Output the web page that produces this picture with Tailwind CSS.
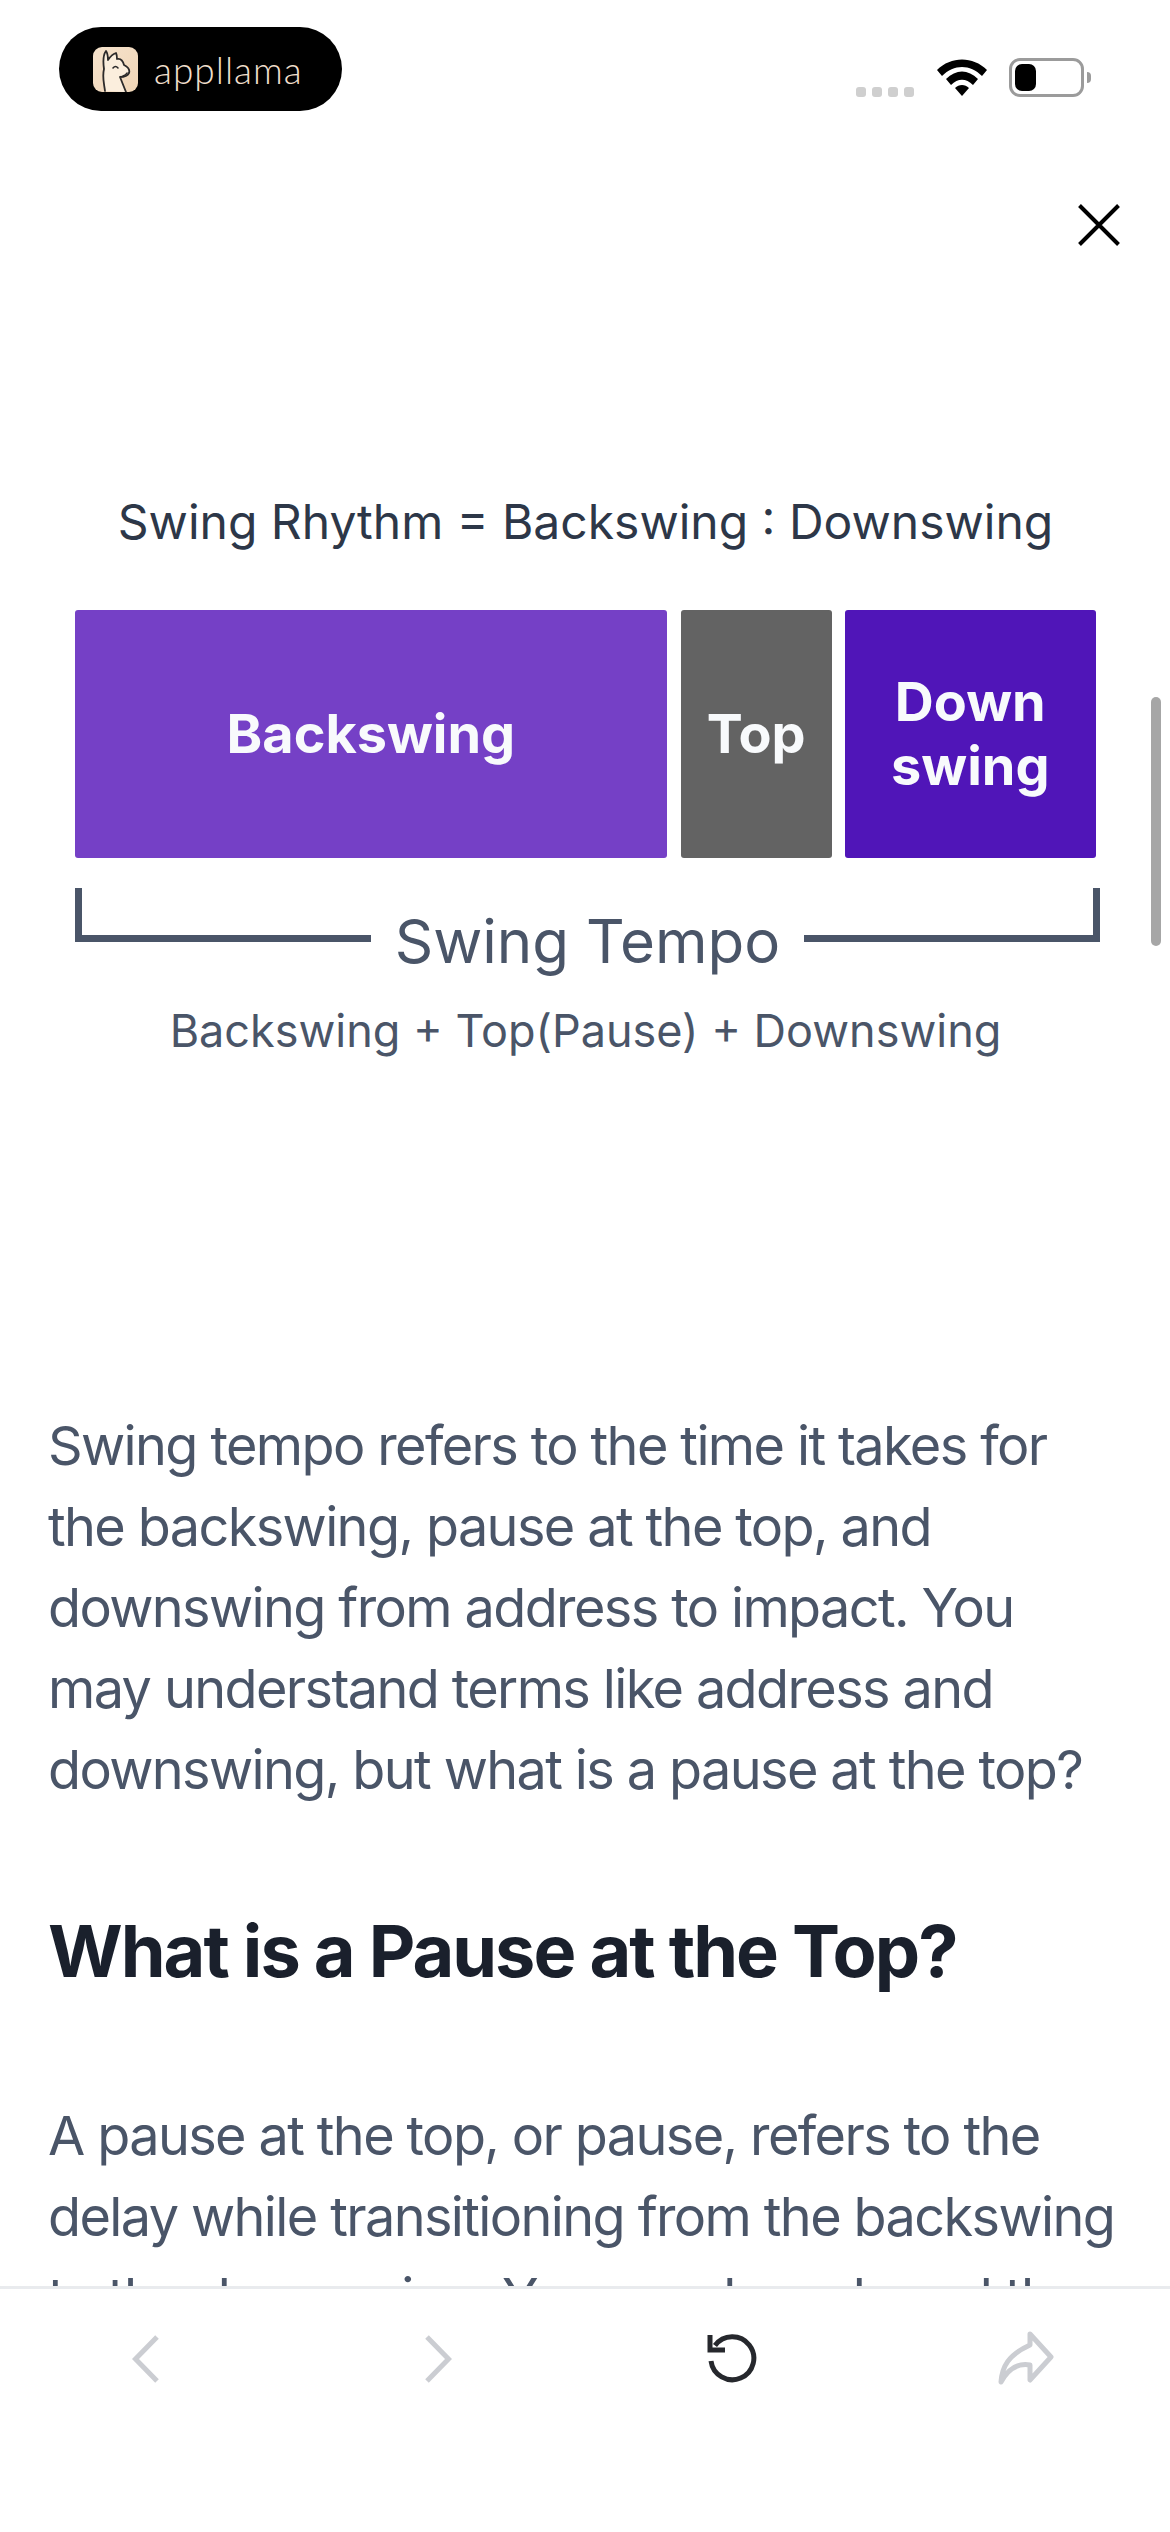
<!DOCTYPE html>
<html><head><meta charset="utf-8"><script src="https://cdn.jsdelivr.net/npm/@tailwindcss/browser@4"></script></head>
<body class="m-0 bg-white">
<div class="relative w-[1170px] h-[2532px] overflow-hidden bg-white font-['Inter',sans-serif]">
  <!-- status bar -->
  <div class="flex items-start justify-between pl-[59px] pr-[79px] pt-[27px] h-[204px]">
    <div class="flex items-center w-[283px] h-[84px] rounded-full bg-black pl-[34px] gap-[16px]">
      <svg class="w-[45px] h-[45px]" viewBox="0 0 45 45">
        <defs><linearGradient id="lg" x1="0" y1="0" x2="1" y2="1"><stop offset="0" stop-color="#f6e3cd"/><stop offset="1" stop-color="#f0d5b6"/></linearGradient></defs>
        <rect width="45" height="45" rx="9" fill="url(#lg)"/>
        <path d="M12 44 C11 36 9 30 11 22 C10 15 10 8 13 4 C15 7 15 10 15 13 C17 10 20 7 23 6 C24 8 24 10 24 12 C28 11 30 14 31 18 C35 20 37 23 36 26 C34 30 30 30 27 30 C29 35 31 40 33 45" fill="#fbeedd" stroke="#2c2a2a" stroke-width="1.8" stroke-linecap="round" stroke-linejoin="round"/>
        <path d="M20 21 Q22.500 18 25 21 M30 29 Q33 28 34 26" fill="none" stroke="#2c2a2a" stroke-width="1.600" stroke-linecap="round"/>
      </svg>
      <span class="font-['Lato',sans-serif] font-light text-[37px] leading-none text-[#f0dfcc] tracking-[1px] mt-[1px]">appllama</span>
    </div>
    <div class="flex items-center mt-[31px] h-[39px]">
      <div class="flex gap-[6px] self-end">
        <span class="w-[10px] h-[10px] rounded-[3px] bg-[#cfcfcf]"></span>
        <span class="w-[10px] h-[10px] rounded-[3px] bg-[#cfcfcf]"></span>
        <span class="w-[10px] h-[10px] rounded-[3px] bg-[#cfcfcf]"></span>
        <span class="w-[10px] h-[10px] rounded-[3px] bg-[#cfcfcf]"></span>
      </div>
      <svg class="ml-[23px] w-[50px] h-[37px]" viewBox="0 0 50 37">
        <path d="M0 11 C14 -3 36 -3 50 11 L45 17 C33 5 17 5 5 17 Z M9 20 C19 10 31 10 41 20 L36 26 C29 19 21 19 14 26 Z M18 29 C22 25 28 25 32 29 L25 37 Z" fill="#000"/>
      </svg>
      <div class="ml-[22px] flex items-center">
        <div class="w-[75px] h-[39px] rounded-[11px] border-[3px] border-[#9b9b9b] p-[3px]">
          <div class="w-[21px] h-full rounded-[7px] bg-black"></div>
        </div>
        <div class="ml-[3px] w-[4px] h-[11px] rounded-r-full bg-[#9b9b9b]"></div>
      </div>
    </div>
  </div>
  <!-- close -->
  <div class="flex justify-end pr-[50px] h-[42px]">
    <svg class="w-[42px] h-[42px]" viewBox="0 0 42 42"><path d="M1.500 1.500 L40.500 40.500 M40.500 1.500 L1.500 40.500" stroke="#000" stroke-width="4" fill="none"/></svg>
  </div>
  <!-- diagram -->
  <div class="pl-[75px] pr-[74px] pt-[240px]">
    <p class="text-center text-[48px] leading-[72px] text-[#2d3748]">Swing Rhythm = Backswing : Downswing</p>
    <div class="flex mt-[52px] h-[248px] gap-[13px] text-[54px] leading-[64px] font-bold text-[#f8fafc] text-center">
      <div class="w-[593px] flex items-center justify-center rounded-[3px] bg-[#7540c6]">Backswing</div>
      <div class="w-[151px] ml-[1px] flex items-center justify-center rounded-[3px] bg-[#636363]">Top</div>
      <div class="w-[252px] flex items-center justify-center rounded-[3px] bg-[#5015b8]">Down<br>swing</div>
    </div>
    <div class="flex items-start mt-[30px] -mr-[4px] h-[54px] text-[#4a5568]">
      <div class="w-[296px] h-[54px] border-l-[7px] border-b-[7px] border-[#4a5568]"></div>
      <div class="flex-1 text-center text-[60px] leading-[90px] mt-[8px]">Swing Tempo</div>
      <div class="w-[296px] h-[54px] border-r-[7px] border-b-[7px] border-[#4a5568]"></div>
    </div>
    <p class="mt-[53px] text-center text-[45px] leading-[72px] text-[#4a5568]">Backswing + Top(Pause) + Downswing</p>
  </div>
  <!-- article -->
  <div class="pl-[48px] pr-[48px] pt-[338px]">
    <p class="text-[54px] leading-[81px] tracking-[-0.03em] text-[#4a5568]">Swing tempo refers to the time it takes for the backswing, pause at the top, and downswing from address to impact. You may understand terms like address and downswing, but what is a pause at the top?</p>
    <h2 class="mt-[96px] text-[72px] leading-[90px] font-bold tracking-[-0.0275em] text-[#1a202c]">What is a Pause at the Top?</h2>
    <p class="mt-[99px] text-[54px] leading-[81px] tracking-[-0.03em] text-[#4a5568]">A pause at the top, or pause, refers to the delay while transitioning from the backswing to the downswing. You may have heard the</p>
  </div>
  <!-- scrollbar -->
  <div class="absolute left-[1151px] top-[697px] w-[10px] h-[249px] rounded-full bg-[#a6a6a6]"></div>
  <!-- bottom bar -->
  <div class="absolute left-0 right-0 bottom-0 h-[246px] bg-white border-t-[3px] border-[#e9ebee]">
    <div class="relative h-[96px]">
      <svg class="absolute left-[132px] top-[46px] w-[28px] h-[48px]" viewBox="0 0 28 48"><path d="M25 2 L3.500 24 L25 46" fill="none" stroke="#cbcdd2" stroke-width="5"/></svg>
      <svg class="absolute left-[424px] top-[46px] w-[28px] h-[48px]" viewBox="0 0 28 48"><path d="M3 2 L24.500 24 L3 46" fill="none" stroke="#cbcdd2" stroke-width="5"/></svg>
      <svg class="absolute left-[707px] top-[44px] w-[50px] h-[50px]" viewBox="0 0 50 50"><path d="M4 28 A21.500 21.500 0 1 0 8 12.500" fill="none" stroke="#26282d" stroke-width="5"/><path d="M3 2 L3 17 L18 17" fill="none" stroke="#26282d" stroke-width="5"/></svg>
      <svg class="absolute left-[998px] top-[42px] w-[56px] h-[54px]" viewBox="0 0 56 54"><path d="M3 51 C4 36 10 24 32 14 L32 3 L53 26 L32 49 L32 34 C20 32 10 38 3 51 Z" fill="none" stroke="#cbcdd2" stroke-width="5" stroke-linejoin="round"/></svg>
    </div>
  </div>
</div>
</body></html>
